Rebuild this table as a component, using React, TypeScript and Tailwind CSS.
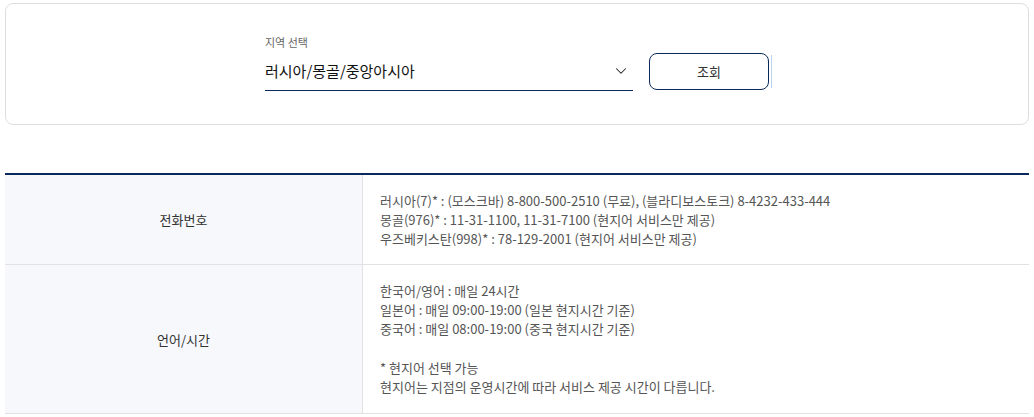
import { ChevronDown } from "lucide-react";

const phones = [
  "러시아(7)* : (모스크바) 8-800-500-2510 (무료), (블라디보스토크) 8-4232-433-444",
  "몽골(976)* : 11-31-1100, 11-31-7100 (현지어 서비스만 제공)",
  "우즈베키스탄(998)* : 78-129-2001 (현지어 서비스만 제공)",
];

export default function App() {
  return (
    <main
      className="w-full min-h-screen bg-white px-[5px] pt-[3px]"
      style={{ fontFamily: '"Noto Sans CJK KR", "Noto Sans", sans-serif' }}
    >
      {/* Region search card */}
      <div className="h-[122px] rounded-lg border border-[#dedede] pt-[30px] flex items-start justify-center">
        <div className="flex items-end gap-4">
          <div className="w-[368px]">
            <p className="text-[11px] leading-4 text-[#666]">지역 선택</p>
            <div className="mt-[3px] h-[38px] flex items-center justify-between border-b border-[#0b2a5b] pb-px">
              <span className="text-[15px] text-[#111]">러시아/몽골/중앙아시아</span>
              <ChevronDown size={18} strokeWidth={1.4} className="mr-[3px] text-[#222]" />
            </div>
          </div>
          <div className="relative mb-px">
            <button className="w-[120px] h-[37px] rounded-lg border border-[#0b2a5b] text-[13px] text-[#333] bg-white">
              조회
            </button>
            {/* focus caret artifact */}
            <span className="absolute left-[122px] top-[2px] w-px h-[33px] bg-[#b9d3ee]" />
          </div>
        </div>
      </div>

      {/* Info table */}
      <div className="mt-[48px] border-t-2 border-[#0b2a5b] text-[13px] leading-[19px]">
        <div className="flex border-b border-[#e2e2e2]">
          <div className="w-[358px] shrink-0 bg-[#f7f8fc] border-r border-[#e2e2e2] flex items-center justify-center text-[#333]">
            전화번호
          </div>
          <div className="pl-[17px] pt-4 pb-4 text-[#555]">
            {phones.map((p) => (
              <p key={p}>{p}</p>
            ))}
          </div>
        </div>
        <div className="flex border-b border-[#e2e2e2]">
          <div className="w-[358px] shrink-0 bg-[#f7f8fc] border-r border-[#e2e2e2] flex items-center justify-center text-[#333]">
            언어/시간
          </div>
          <div className="pl-[17px] pt-4 pb-[17px] text-[#555]">
            <p>한국어/영어 : 매일 24시간</p>
            <p>일본어 : 매일 09:00-19:00 (일본 현지시간 기준)</p>
            <p>중국어 : 매일 08:00-19:00 (중국 현지시간 기준)</p>
            <div className="h-[20px]" />
            <p>* 현지어 선택 가능</p>
            <p>현지어는 지점의 운영시간에 따라 서비스 제공 시간이 다릅니다.</p>
          </div>
        </div>
      </div>
    </main>
  );
}
